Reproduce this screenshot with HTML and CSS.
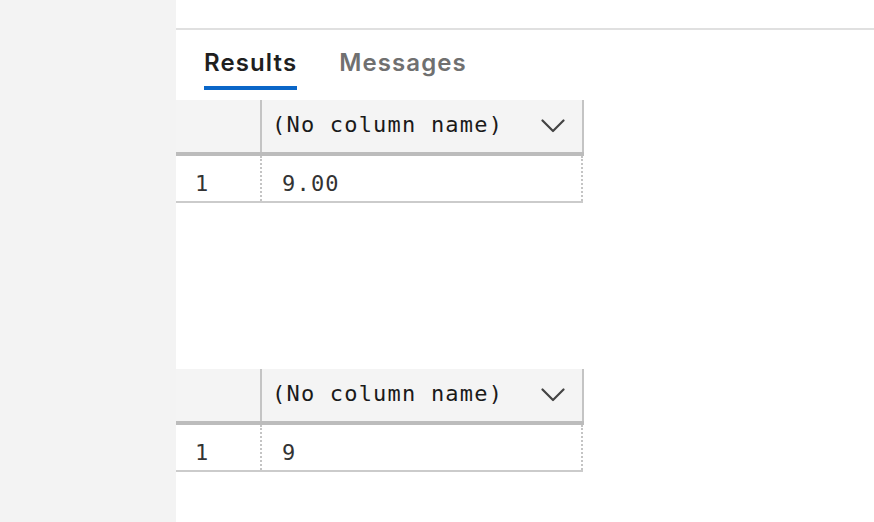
FILE: index.html
```html
<!DOCTYPE html>
<html>
<head>
<meta charset="utf-8">
<link rel="stylesheet" href="styles.css">
</head>
<body>
<div class="app">
  <aside class="sidebar"></aside>
  <main class="main">
    <div class="topbar"></div>
    <nav class="tabs">
      <div class="tab active">Results</div>
      <div class="tab">Messages</div>
    </nav>
    <section class="grid">
      <div class="grid-head">
        <div class="rownum-head"></div>
        <div class="col-head">
          <span class="col-title">(No column name)</span>
          <svg class="chev" width="24" height="14" viewBox="0 0 24 14"><path d="M1.5 1.5 L12 12 L22.5 1.5" fill="none" stroke="#444" stroke-width="2.2" stroke-linecap="round" stroke-linejoin="round"/></svg>
        </div>
      </div>
      <div class="grid-row">
        <div class="rownum">1</div>
        <div class="cell">9.00</div>
      </div>
    </section>
    <section class="grid second">
      <div class="grid-head">
        <div class="rownum-head"></div>
        <div class="col-head">
          <span class="col-title">(No column name)</span>
          <svg class="chev" width="24" height="14" viewBox="0 0 24 14"><path d="M1.5 1.5 L12 12 L22.5 1.5" fill="none" stroke="#444" stroke-width="2.2" stroke-linecap="round" stroke-linejoin="round"/></svg>
        </div>
      </div>
      <div class="grid-row">
        <div class="rownum">1</div>
        <div class="cell">9</div>
      </div>
    </section>
  </main>
</div>
</body>
</html>
```
FILE: styles.css
```css
* { box-sizing: border-box; }
html, body { margin: 0; padding: 0; background: #fff; }
.app {
  display: flex;
  width: 874px;
  height: 522px;
  overflow: hidden;
}
.sidebar {
  width: 176px;
  flex: none;
  background: #f3f3f3;
}
.main {
  flex: 1;
  display: flex;
  flex-direction: column;
  background: #fff;
}
.topbar {
  height: 30px;
  border-bottom: 2px solid #e0e0e0;
  flex: none;
}
.tabs {
  display: flex;
  gap: 42px;
  padding-left: 28px;
  height: 70px;
  flex: none;
}
.tab {
  font-family: Inter, "Noto Sans", sans-serif;
  font-size: 24px;
  font-weight: 600;
  color: #707070;
  padding-top: 18px;
  height: 60px;
  letter-spacing: 1.1px;
}
.tab.active {
  color: #1f1f1f;
  border-bottom: 4px solid #0a66c8;
}
.grid {
  width: 408px;
  font-family: "DejaVu Sans Mono", monospace;
  font-size: 22px;
  letter-spacing: 1.2px;
}
.grid.second { margin-top: 166px; }
.grid-head {
  display: flex;
  height: 56px;
  background: #f4f4f4;
  border-bottom: 4px solid #bcbcbc;
}
.rownum-head {
  width: 86px;
  flex: none;
  border-right: 2px solid #c4c4c4;
}
.col-head {
  flex: 1;
  display: flex;
  align-items: center;
  justify-content: space-between;
  padding: 0 17px 0 10px;
  border-right: 2px solid #c4c4c4;
  color: #1a1a1a;
}
.col-title { padding-bottom: 4px; }
.chev { flex: none; }
.grid-row {
  display: flex;
  height: 47px;
  border-bottom: 2px solid #cbcbcb;
  width: 407px;
}
.rownum {
  width: 86px;
  flex: none;
  padding: 9px 0 0 19px;
  display: flex;
  align-items: center;
  border-right: 2px dotted #c4c4c4;
  color: #333;
}
.cell {
  flex: 1;
  padding: 9px 0 0 20px;
  display: flex;
  align-items: center;
  border-right: 2px dotted #c4c4c4;
  color: #333;
}
```
